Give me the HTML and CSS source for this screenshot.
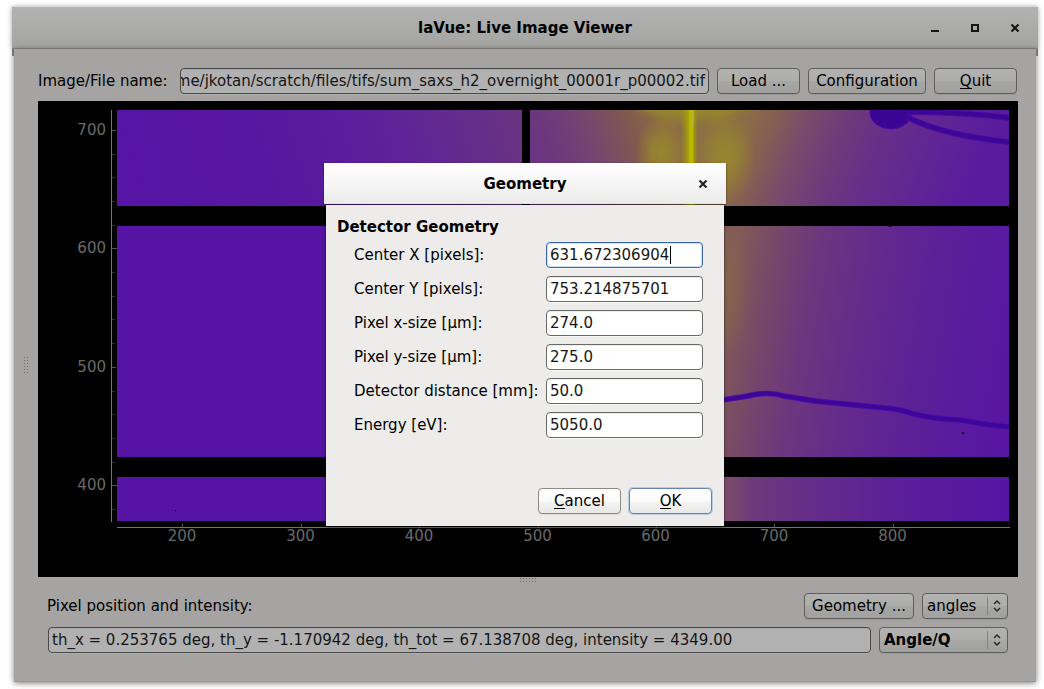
FILE: index.html
```html
<!DOCTYPE html>
<html lang="en">
<head>
<meta charset="utf-8">
<title>laVue: Live Image Viewer</title>
<link rel="stylesheet" href="styles.css">
</head>
<body>
<main class="window">
  <header class="titlebar">
    <h1 class="title">laVue: Live Image Viewer</h1>
    <svg class="window-controls" width="100" height="20" viewBox="0 0 100 20" shape-rendering="crispEdges">
      <path d="M6 12h8v2H6z" fill="#151515"/>
      <path d="M47 7h6v6h-6z" fill="none" stroke="#151515" stroke-width="2"/>
      <path d="M86.500 6.500l7 7M93.500 6.500l-7 7" stroke="#151515" stroke-width="2.100" shape-rendering="auto"/>
    </svg>
  </header>
  <section class="content">
    <div class="toolbar">
      <label class="file-label">Image/File name:</label>
      <div class="field path"><span>me/jkotan/scratch/files/tifs/sum_saxs_h2_overnight_00001r_p00002.tif</span></div>
      <button class="button standard">Load ...</button>
      <button class="button config">Configuration</button>
      <button class="button standard"><span class="key">Q</span>uit</button>
    </div>
    <svg class="plot" width="980" height="476" viewBox="38 101 980 476">
      <defs>
        <linearGradient id="topLeft" gradientUnits="userSpaceOnUse" x1="140" y1="240" x2="680" y2="60">
          <stop offset="0" stop-color="#5714a5"/><stop offset=".3" stop-color="#5918a0"/>
          <stop offset=".48" stop-color="#5f2299"/><stop offset=".62" stop-color="#652d8a"/>
          <stop offset=".73" stop-color="#6c367f"/><stop offset=".81" stop-color="#76466f"/>
          <stop offset=".88" stop-color="#81594f"/><stop offset=".94" stop-color="#8a6a48"/>
          <stop offset="1" stop-color="#8b6c48"/>
        </linearGradient>
        <linearGradient id="topRight" gradientUnits="userSpaceOnUse" x1="700" y1="60" x2="980" y2="170">
          <stop offset="0" stop-color="#8b6c48"/><stop offset=".22" stop-color="#8b6c48"/>
          <stop offset=".31" stop-color="#845d54"/><stop offset=".4" stop-color="#7a4b6b"/>
          <stop offset=".52" stop-color="#6f3b79"/><stop offset=".65" stop-color="#672f88"/>
          <stop offset=".82" stop-color="#602594"/><stop offset="1" stop-color="#5a1b9e"/>
        </linearGradient>
        <linearGradient id="middle" gradientUnits="userSpaceOnUse" x1="724" y1="330" x2="1004" y2="380">
          <stop offset="0" stop-color="#7f5a58"/><stop offset=".14" stop-color="#76456b"/>
          <stop offset=".28" stop-color="#6c367e"/><stop offset=".48" stop-color="#642a8d"/>
          <stop offset=".7" stop-color="#5c2097"/><stop offset=".9" stop-color="#591aa0"/>
          <stop offset="1" stop-color="#5917a1"/>
        </linearGradient>
        <linearGradient id="bottom" x1="0" x2="1">
          <stop offset="0" stop-color="#7c4e69"/><stop offset=".1" stop-color="#6e397b"/>
          <stop offset=".3" stop-color="#652d89"/><stop offset=".6" stop-color="#5c1f98"/>
          <stop offset="1" stop-color="#5714a4"/>
        </linearGradient>
        <linearGradient id="beam" x1="0" x2="1">
          <stop offset="0" stop-color="#a0a000" stop-opacity="0"/><stop offset=".28" stop-color="#a8a400" stop-opacity=".6"/>
          <stop offset=".42" stop-color="#a9a600" stop-opacity=".85"/>
          <stop offset=".52" stop-color="#b9b900"/><stop offset=".7" stop-color="#b9b900"/>
          <stop offset=".76" stop-color="#a6a200" stop-opacity=".7"/><stop offset="1" stop-color="#a0a000" stop-opacity="0"/>
        </linearGradient>
        <linearGradient id="fade" x2="0" y2="1">
          <stop offset="0" stop-color="#a19a12" stop-opacity=".8"/><stop offset="1" stop-color="#a19a12" stop-opacity="0"/>
        </linearGradient>
        <radialGradient id="lobe"><stop offset="0" stop-color="#98862d"/><stop offset=".4" stop-color="#98852e" stop-opacity=".75"/><stop offset="1" stop-color="#97802f" stop-opacity="0"/></radialGradient>
        <radialGradient id="glow"><stop offset="0" stop-color="#8d7041" stop-opacity=".55"/><stop offset="1" stop-color="#8d7041" stop-opacity="0"/></radialGradient>
        <filter id="soften" x="-20%" y="-50%" width="140%" height="200%"><feGaussianBlur stdDeviation="8 3"/></filter>
        <clipPath id="topClip"><path d="M117 110h405v96H117zM530 110h479v96H530z"/></clipPath>
        <clipPath id="middleClip"><path d="M724 226h285v231H724z"/></clipPath>
      </defs>
      <rect x="38" y="101" width="980" height="476"/>
      <g clip-path="url(#topClip)">
        <rect x="117" y="110" width="574" height="96" fill="url(#topLeft)"/>
        <rect x="691" y="110" width="318" height="96" fill="url(#topRight)"/>
        <ellipse cx="661" cy="153" rx="26" ry="38" fill="url(#lobe)"/>
        <ellipse cx="725" cy="156" rx="31" ry="47" fill="url(#lobe)"/>
        <path d="M635 104h112l-36 24h-41z" fill="url(#fade)" filter="url(#soften)"/>
        <rect x="681" y="110" width="17" height="96" fill="url(#beam)"/>
        <path d="M691 110h3v10l-1 8h-1l-1-8z" fill="#b5b33e" opacity=".7"/>
        <path d="M870 110q-1 8 6 14 7 5 15 5 9 0 16-6l4-4q2-5 0-9z" fill="#3a0593" stroke="#5008a7"/>
        <path d="M907 112Q965 112 1010 118M907 117Q945 136 1010 142" fill="none" stroke="#4d08ab" stroke-width="6"/>
        <path d="M907 112Q965 112 1010 118M907 117Q945 136 1010 142" fill="none" stroke="#3c0791" stroke-width="4"/>
      </g>
      <path d="M117 226h209v231H117zM117 477h209v44H117z" fill="#5714a4"/>
      <g clip-path="url(#middleClip)">
        <rect x="724" y="226" width="285" height="231" fill="url(#middle)"/>
        <ellipse cx="724" cy="285" rx="28" ry="76" fill="url(#glow)"/>
        <path d="M722 400L748 396Q768 391 784 396L815 401 895 409Q905 411 914 414 933 419 961 420 985 425 1010 427" fill="none" stroke="#4d08ab" stroke-width="5.500"/>
        <path d="M722 400L748 396Q768 391 784 396L815 401 895 409Q905 411 914 414 933 419 961 420 985 425 1010 427" fill="none" stroke="#3c0697" stroke-width="3.500"/>
      </g>
      <rect x="724" y="477" width="285" height="44" fill="url(#bottom)"/>
      <path d="M889 226h2v1h-2zM962 432h2v2h-2zM175 510h1v1h-1z"/>
      <g shape-rendering="crispEdges" fill="none">
        <path d="M111.500 110v412M117 527.500h893" stroke="#747474"/>
        <path d="M112 130.500h4M112 248.500h5M112 367.500h4M112 485.500h5M182.500 524v3M301.500 524v3M419.500 524v3M538.500 524v3M656.500 524v3M774.500 524v3M893.500 524v3" stroke="#555"/>
        <path d="M112 154.500h3M112 177.500h3M112 201.500h3M112 225.500h3M112 272.500h3M112 296.500h3M112 319.500h3M112 343.500h3M112 391.500h3M112 414.500h3M112 438.500h3M112 462.500h3M112 509.500h3" stroke="#303030"/>
      </g>
      <g class="ticks">
        <g text-anchor="end"><text x="106" y="135">700</text><text x="106" y="253">600</text><text x="106" y="372">500</text><text x="106" y="490">400</text></g>
        <g text-anchor="middle"><text x="182" y="541">200</text><text x="300.500" y="541">300</text><text x="419" y="541">400</text><text x="537.500" y="541">500</text><text x="655.500" y="541">600</text><text x="774" y="541">700</text><text x="892.500" y="541">800</text></g>
      </g>
    </svg>
    <footer class="status">
      <div class="status-row">
        <span class="position-label">Pixel position and intensity:</span>
        <button class="button geometry">Geometry ...</button>
        <div class="button combo unit"><span>angles</span><svg class="arrows" width="21" height="18" viewBox="0 0 21 18"><path d="M.5 0v18" stroke="#828282"/><path d="M7 7l3-3 3 3M7 11l3 3 3-3" fill="none" stroke="#222" stroke-width="1.400"/></svg></div>
      </div>
      <div class="status-row">
        <div class="field readout"><span>th_x = 0.253765 deg, th_y = -1.170942 deg, th_tot = 67.138708 deg, intensity = 4349.00</span></div>
        <div class="button combo mode"><span>Angle/Q</span><svg class="arrows" width="21" height="18" viewBox="0 0 21 18"><path d="M.5 0v18" stroke="#828282"/><path d="M7 7l3-3 3 3M7 11l3 3 3-3" fill="none" stroke="#222" stroke-width="1.400"/></svg></div>
      </div>
    </footer>
    <i class="grip grip-side"></i>
    <i class="grip grip-bottom"></i>
  </section>
</main>
<section class="dialog">
  <header class="dialog-title">
    <h2 class="title">Geometry</h2>
    <svg class="dialog-close" width="12" height="12" viewBox="0 0 12 12"><path d="M2.500 2.500l7 7M9.500 2.500l-7 7" stroke="#222" stroke-width="2.100"/></svg>
  </header>
  <div class="dialog-body">
    <h3 class="group-title">Detector Geometry</h3>
    <div class="form">
      <label>Center X [pixels]:</label><div class="field focused"><span>631.672306904</span><i class="caret"></i></div>
      <label>Center Y [pixels]:</label><div class="field"><span>753.214875701</span></div>
      <label>Pixel x-size [µm]:</label><div class="field"><span>274.0</span></div>
      <label>Pixel y-size [µm]:</label><div class="field"><span>275.0</span></div>
      <label>Detector distance [mm]:</label><div class="field"><span>50.0</span></div>
      <label>Energy [eV]:</label><div class="field"><span>5050.0</span></div>
    </div>
    <div class="actions">
      <button class="button"><span class="key">C</span>ancel</button>
      <button class="button default"><span class="key">O</span>K</button>
    </div>
  </div>
</section>
</body>
</html>
```
FILE: styles.css
```css
* { box-sizing: border-box; }
body {
  margin: 0;
  height: 689px;
  overflow: hidden;
  background: #fff;
  color: #000;
  font: 15px/18px "DejaVu Sans", sans-serif;
  white-space: nowrap;
}
h1, h2, h3 { margin: 0; font-size: 15px; }
.window { width: 1026px; margin: 7px 0 0 12px; display: flow-root; }
.titlebar {
  height: 42px;
  display: grid;
  grid-template-columns: 1fr;
  align-items: center;
  background: linear-gradient(#b2b2b2, #a4a4a1);
  border-bottom: 1px solid #8b8b88;
  box-shadow: 0 0 5px #0006;
}
.title { grid-area: 1 / 1; text-align: center; }
.window-controls { grid-area: 1 / 1; justify-self: end; margin-right: 13px; }
.content {
  position: relative;
  height: 633px;
  margin: 0 2px;
  padding: 19px 18px 0 24px;
  background: #a5a4a2;
  border-bottom: 1px solid #979694;
  box-shadow: 0 1px 6px #0008;
}
.content::before {
  content: "";
  position: absolute;
  inset: 0 -2px auto;
  height: 7px;
  border: solid #777673;
  border-width: 0 2px;
}
.toolbar { display: flex; gap: 8px; height: 26px; }
.file-label { width: 134px; line-height: 26px; }
.field {
  display: flex;
  align-items: center;
  height: 26px;
  padding: 0 3px;
  border: 1px solid #494947;
  border-radius: 4px;
  background: #b1b1b1;
  box-shadow: inset 0 1px #a8a8a8, 0 1px #afafad;
  color: #151515;
  overflow: hidden;
}
.path { width: 529px; justify-content: flex-end; padding: 0 3px 0 0; }
.button {
  height: 26px;
  padding: 0;
  border: 1px solid #5f5e5b;
  border-radius: 4px;
  background: linear-gradient(#b2b2b2 0, #adadab 50%, #a7a7a5 52%, #a0a09e);
  box-shadow: 0 1px #9a9996;
  color: #000;
  font: inherit;
}
.standard { width: 83px; }
.config { width: 118px; }
.key { background: linear-gradient(#000, #000) 0 16px / 100% 1px no-repeat; }
.plot { display: block; margin-top: 7px; }
.ticks { font: 15px "DejaVu Sans", sans-serif; fill: #696969; }
.status { display: grid; gap: 8px; margin: 16px 10px 0 9px; }
.status-row { display: flex; gap: 8px; }
.position-label { flex: 1; line-height: 26px; }
.geometry { width: 110px; }
.combo { display: flex; justify-content: space-between; align-items: center; padding: 0 0 0 4px; }
.unit { width: 86px; }
.mode { width: 129px; font-weight: bold; }
.arrows { margin-right: -1px; }
.readout { width: 823px; margin-left: 1px; }
.grip { position: absolute; background: radial-gradient(circle, #6f6e6c 0 .8px, transparent 1px) 0 0 / 3px 3px; }
.grip-side { left: 9px; top: 307px; width: 6px; height: 18px; }
.grip-bottom { left: 505px; top: 528px; width: 18px; height: 6px; }
.dialog { position: absolute; left: 324px; top: 163px; width: 402px; }
.dialog-title {
  height: 41px;
  display: grid;
  align-items: center;
  background: linear-gradient(#fff, #ebebea);
  box-shadow: 0 1px 2px #0008;
}
.dialog-close { grid-area: 1 / 1; justify-self: end; margin-right: 17px; }
.dialog-body {
  margin: 1px 2px 0;
  height: 321px;
  padding: 13px 12px 12px 11px;
  background: #edecea;
  box-shadow: 0 1px 3px #0009;
  display: flex;
  flex-direction: column;
}
.group-title { line-height: 18px; }
.form {
  display: grid;
  grid-template-columns: 192px 157px;
  grid-auto-rows: 26px;
  row-gap: 8px;
  margin: 6px 0 0 17px;
  line-height: 26px;
}
.form .field { background: #fff; border-color: #686866; box-shadow: inset 0 1px #ededed, 0 1px #f9f9f8; }
.form .focused { border-color: #3c69a5; box-shadow: inset 0 0 0 1px #ccdff4, 0 1px #f9f9f8; }
.caret { width: 1px; height: 18px; margin-left: 1px; background: #000; }
.actions { display: grid; grid-template-columns: 83px 83px; justify-content: end; gap: 8px; margin-top: auto; }
.actions .button { border-color: #8a8984; background: linear-gradient(#fff, #fbfbfb 50%, #f4f4f3 54%, #e8e7e5); box-shadow: 0 1px #dcdbd8; }
.actions .default { border-color: #6486b0; box-shadow: 0 0 0 1px #bacde3; }
```
